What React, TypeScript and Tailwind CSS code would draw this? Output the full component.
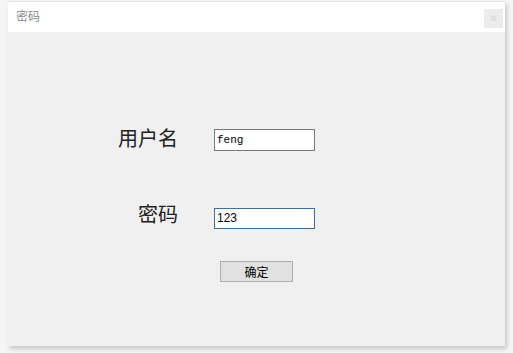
import React from "react";

export default function App() {
  const cjk = { fontFamily: '"Noto Sans CJK SC", "Microsoft YaHei", sans-serif' };
  return (
    <div className="w-[513px] h-[353px] bg-[#f5f5f5] pt-[1px] pl-[8px] overflow-hidden">
      <div className="w-[497px] h-[345px] flex flex-col bg-[#f0f0f0] border-t border-[#e4e4e4] shadow-[2px_3px_4px_rgba(0,0,0,0.18)]">
        <div className="h-[30px] bg-white flex items-center justify-between pl-[8px] pr-[2px]">
          <span className="text-[12px] text-[#8c8c8c] leading-none -mt-[2px]" style={cjk}>密码</span>
          <div className="w-[19px] h-[19px] bg-[#ececec] flex items-center justify-center mt-[3px]">
            <div className="w-[5px] h-[5px] bg-[#e0e0e0]" />
          </div>
        </div>
        <div className="flex-1 flex flex-col pt-[97px]">
          <div className="flex items-center h-[22px]">
            <div className="w-[170px] text-right text-[20px] text-[#222] leading-none -mt-[4px]" style={cjk}>用户名</div>
            <div className="ml-[36px] w-[101px] h-[22px] bg-white border border-[#7a7a7a] flex items-center pl-[2px]">
              <span className="text-[11px] text-black" style={{ fontFamily: '"Liberation Mono", monospace' }}>feng</span>
            </div>
          </div>
          <div className="flex items-center h-[22px] mt-[56px]">
            <div className="w-[170px] text-right text-[20px] text-[#222] leading-none -mt-[9px]" style={cjk}>密码</div>
            <div className="ml-[36px] w-[101px] h-[21px] bg-white border border-[#3c6e9e] flex items-center pl-[2px]">
              <span className="text-[12px] text-black" style={{ fontFamily: '"Liberation Sans", sans-serif' }}>123</span>
            </div>
          </div>
          <div className="flex mt-[32px]">
            <div className="ml-[212px] w-[73px] h-[21px] bg-[#e1e1e1] border border-[#adadad] flex items-center justify-center">
              <span className="text-[12px] text-black leading-none" style={cjk}>确定</span>
            </div>
          </div>
        </div>
      </div>
    </div>
  );
}
